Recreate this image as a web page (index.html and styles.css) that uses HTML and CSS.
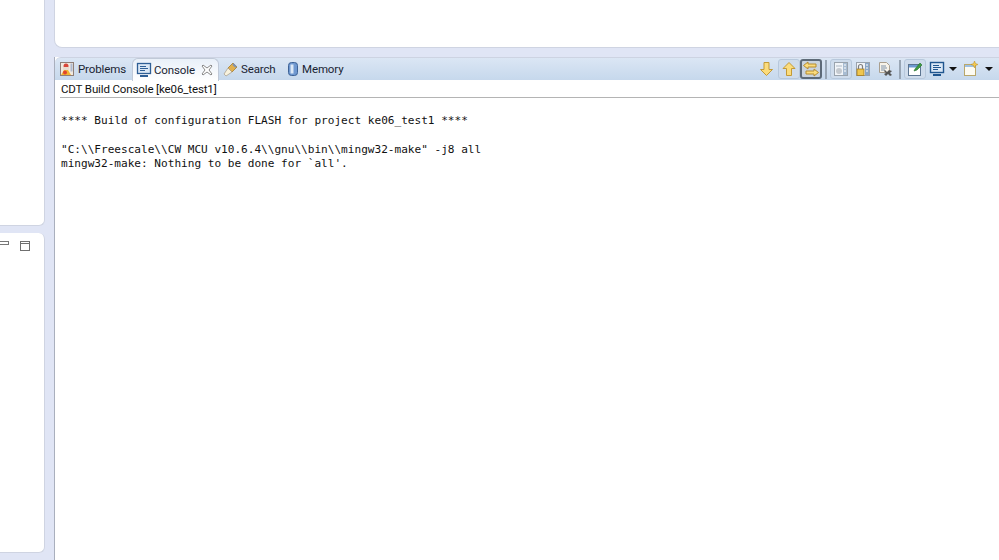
FILE: index.html
```html
<!DOCTYPE html>
<html lang="en">
<head>
<meta charset="utf-8">
<title>Console</title>
<link rel="stylesheet" href="styles.css">
</head>
<body>
<div class="workbench">
  <div class="left-col">
    <div class="left-top"></div>
    <div class="left-bottom">
      <div class="view-controls">
        <svg class="min-icon" width="10" height="5" viewBox="0 0 10 5"><rect x="0.5" y="0.5" width="9" height="3" fill="#fff" stroke="#777"/></svg>
        <svg class="max-icon" width="10" height="10" viewBox="0 0 10 10"><rect x="0.5" y="0.5" width="9" height="9" fill="#fff" stroke="#6f6f6f"/><line x1="1" y1="2.5" x2="9" y2="2.5" stroke="#6f6f6f"/></svg>
      </div>
    </div>
  </div>
  <div class="right-col">
    <div class="editor"></div>
    <div class="console-view">
      <div class="tabbar">
        <div class="tabs">
          <div class="tab tab-problems">
            <svg width="16" height="16" viewBox="0 0 16 16"><rect x="1.500" y="1.500" width="13" height="13" fill="#f1e9df" stroke="#8f7f78"/><circle cx="7" cy="5" r="2.500" fill="#d8473a"/><path d="M4 6h6v3H4z" fill="#e9dcd0"/><path d="M2 14l3-5h4l3 5z" fill="#f2b632"/><circle cx="6" cy="11.500" r="2" fill="#e0442e"/><rect x="11.500" y="2.500" width="2" height="8" fill="#aeb9d0"/></svg>
            <span>Problems</span>
          </div>
          <div class="tab tab-console">
            <svg width="16" height="16" viewBox="0 0 16 16"><rect x="1.500" y="1.500" width="13" height="10" fill="#dbe8f6" stroke="#2f5f96" stroke-width="1.300"/><path d="M4 4.500h6M4 6.500h8M4 8.500h5" stroke="#2f5f96"/><path d="M4 13h8v2H4z" fill="#2f5f96"/></svg>
            <span>Console</span>
            <svg class="close" width="12" height="12" viewBox="0 0 12 12"><path d="M2 1l4 3 4-3 1 1-3 4 3 4-1 1-4-3-4 3-1-1 3-4-3-4z" fill="#fff" stroke="#8a8a8a" stroke-linejoin="round"/></svg>
          </div>
          <div class="tab tab-search">
            <svg width="16" height="16" viewBox="0 0 16 16"><path d="M5 7l5-5 4 4-5 5z" fill="#e2b04e" stroke="#a67c2d" stroke-width=".8"/><path d="M1 13l4-6 4 4-6 4z" fill="#f8f2dd" stroke="#a59a86" stroke-width=".7"/><path d="M10 3l3 3" stroke="#7c92b4" stroke-width="2"/></svg>
            <span>Search</span>
          </div>
          <div class="tab tab-memory">
            <svg width="16" height="16" viewBox="0 0 16 16"><rect x="3.500" y="1.500" width="9" height="13" rx="3" fill="#6f98d0" stroke="#3d6296"/><rect x="5.500" y="3.500" width="3" height="9" fill="#dce8f6"/></svg>
            <span>Memory</span>
          </div>
        </div>
        <div class="toolbar">
          <button class="tool tool-arrow">
            <svg width="16" height="16" viewBox="0 0 16 16"><path d="M5 1.500h5v7h3.500L7.500 14.500 1.500 8.500H5z" fill="#fbdc7c" stroke="#c39a37" stroke-linejoin="round"/></svg>
          </button>
          <button class="tool tool-arrow hover">
            <svg width="16" height="16" viewBox="0 0 16 16"><path d="M5.500 14.500h5v-7H14L8 1.500 2 7.500h3.500z" fill="#fbdc7c" stroke="#c39a37" stroke-linejoin="round"/></svg>
          </button>
          <button class="tool tool-arrow pressed">
            <svg width="18" height="16" viewBox="0 0 18 16"><path d="M6 1v2h8v3H6v2L1.500 4.500z" fill="#fbdc7c" stroke="#b58c30" stroke-linejoin="round"/><path d="M12 8v2H4v3h8v2l4.500-3.500z" fill="#fbdc7c" stroke="#b58c30" stroke-linejoin="round"/></svg>
          </button>
          <span class="sep"></span>
          <button class="tool hover">
            <svg width="16" height="16" viewBox="0 0 16 16"><rect x="1.500" y="1.500" width="13" height="13" fill="#f1f4f8" stroke="#9aa3ad"/><rect x="10" y="2" width="4" height="12" fill="#a8bcd2"/><path d="M11 4h2M11 7h2M11 10h2" stroke="#fff"/><circle cx="6" cy="10" r="3" fill="#c4c9cf"/><rect x="3" y="4" width="6" height="2" fill="#cfd6de"/></svg>
          </button>
          <button class="tool">
            <svg width="16" height="16" viewBox="0 0 16 16"><rect x="1.500" y="1.500" width="13" height="13" fill="#f1f4f8" stroke="#9aa3ad"/><rect x="10" y="2" width="4" height="12" fill="#8aa6c6"/><path d="M11 4h2M11 7h2M11 10h2" stroke="#fff"/><rect x="2" y="8" width="7" height="6.500" fill="#efc64f" stroke="#a37a1e" stroke-width=".8"/><path d="M3.500 8V5.500a2 2 0 0 1 4 0V8" fill="none" stroke="#7d7d7d" stroke-width="1.200"/></svg>
          </button>
          <button class="tool">
            <svg width="16" height="16" viewBox="0 0 16 16"><path d="M2.500 1.500h7l3 3v7h-10z" fill="#f7f3ea" stroke="#a99f8f"/><path d="M4 5h5M4 7h6M4 9h4" stroke="#7f93ab"/><path d="M8 9l2 2 2-2 3 1-2 2 2 2-2 1-2-2-2 2-2-2 2-1-2-2z" fill="#555"/></svg>
          </button>
          <span class="sep"></span>
          <button class="tool hover">
            <svg width="16" height="16" viewBox="0 0 16 16"><rect x="1.500" y="3.500" width="12" height="11" fill="#fff" stroke="#5c7591"/><rect x="2" y="4" width="11" height="2.500" fill="#6f9bd1"/><path d="M8 8l5-6 2 2-5 5-3 1z" fill="#3f9a3f" stroke="#24702b" stroke-width=".6"/></svg>
          </button>
          <button class="tool tool-display">
            <svg width="16" height="16" viewBox="0 0 16 16"><rect x="1.500" y="1.500" width="13" height="10" fill="#dbe8f6" stroke="#20568f" stroke-width="1.400"/><path d="M4 4.500h6M4 6.500h8M4 8.500h5" stroke="#20568f"/><path d="M4 13h8v2H4z" fill="#20568f"/></svg>
          </button>
          <span class="caret caret-a"></span>
          <button class="tool tool-new">
            <svg width="16" height="16" viewBox="0 0 16 16"><rect x="1.500" y="3.500" width="11" height="11" fill="#fdfbf2" stroke="#b9a76a"/><rect x="2" y="4" width="10" height="2" fill="#9dc0e4"/><path d="M11.500 0l1 2.500 2.500 1-2.500 1-1 2.500-1-2.500-2.500-1 2.500-1z" fill="#f4c94f" stroke="#b98c24" stroke-width=".5"/></svg>
          </button>
          <span class="caret caret-b"></span>
        </div>
      </div>
      <div class="console-title"><span>CDT Build Console [ke06_test1]</span></div>
      <pre class="console-output">

**** Build of configuration FLASH for project ke06_test1 ****

"C:\\Freescale\\CW MCU v10.6.4\\gnu\\bin\\mingw32-make" -j8 all
mingw32-make: Nothing to be done for `all'.</pre>
    </div>
  </div>
</div>
</body>
</html>
```
FILE: styles.css
```css
* { box-sizing: border-box; }
html, body { margin: 0; padding: 0; }
body {
  width: 999px;
  height: 560px;
  overflow: hidden;
  background: #e0e5f5;
  font-family: Roboto, "Open Sans", sans-serif;
  color: #111;
}
.workbench {
  display: flex;
  width: 999px;
  height: 560px;
  gap: 9px;
}
.left-col {
  width: 45px;
  flex: none;
  display: flex;
  flex-direction: column;
  gap: 7px;
  padding-bottom: 7px;
}
.left-top {
  height: 226px;
  background: #fff;
  border-radius: 0 0 6px 0;
  border-right: 1px solid #cfd4e2;
  border-bottom: 1px solid #cfd4e2;
}
.left-bottom {
  flex: 1;
  background: #fff;
  border-radius: 0 6px 6px 0;
  border-right: 1px solid #cfd4e2;
  border-bottom: 1px solid #cfd4e2;
  padding-top: 7px;
}
.view-controls {
  display: flex;
  align-items: flex-start;
  gap: 11px;
}
.min-icon { margin-left: -1px; margin-top: 1px; }
.max-icon { margin-top: 1px; }
.right-col {
  flex: 1;
  min-width: 0;
  display: flex;
  flex-direction: column;
  gap: 9px;
}
.editor {
  height: 48px;
  background: #fff;
  border-radius: 0 0 0 8px;
  border-left: 1px solid #cfd4e2;
  border-bottom: 1px solid #cfd4e2;
}
.console-view {
  flex: 1;
  background: #fff;
  border-left: 1px solid #a9afbd;
  display: flex;
  flex-direction: column;
}
.tabbar {
  height: 23px;
  flex: none;
  display: flex;
  justify-content: space-between;
  background: linear-gradient(#dbe6f4, #c6d8ec);
  border-top: 1px solid #cdd3e2;
  border-top-left-radius: 6px;
}
.tabs { display: flex; padding-left: 3px; }
.tab {
  display: flex;
  align-items: center;
  font-size: 11.5px;
  letter-spacing: -0.13px;
  white-space: nowrap;
  color: #1a2433;
  padding-left: 1px;
}
.tab span { margin-left: 2px; }
.tab-problems { width: 74px; }
.tab-problems span { margin-left: 3px; }
.tab-console {
  width: 87px;
  height: 23px;
  padding-left: 3px;
  background: linear-gradient(#e9f0f9, #fff);
  border-radius: 6px 6px 0 0;
  border: 1px solid #c0c9d8;
  border-bottom: none;
}
.tab-console .close { margin-left: 6px; }
.tab-search { width: 62px; margin-left: 3px; }
.tab-memory { width: 70px; }
.tab-memory span { margin-left: 1px; }
.toolbar {
  display: flex;
  align-items: center;
  padding-right: 5px;
}
.tool {
  width: 22px;
  height: 20px;
  padding: 0;
  border: 1px solid transparent;
  border-radius: 3px;
  background: none;
  display: flex;
  align-items: center;
  justify-content: center;
}
.tool.hover {
  background: #cfdcec;
  border-color: #b7c8dc;
}
.tool.pressed {
  background: #c9d3de;
  border: 2px solid #5d6a78;
}
.sep {
  width: 2px;
  height: 19px;
  margin: 0 3px;
  background: #98a5b4;
}
.caret {
  width: 0;
  height: 0;
  border-left: 4px solid transparent;
  border-right: 4px solid transparent;
  border-top: 4px solid #111;
  margin-left: 1px;
  margin-right: 1px;
}
.caret-a { margin-right: 3px; }
.caret-b { margin-left: 3px; }
.console-title {
  height: 18px;
  flex: none;
  margin-left: 5px;
  padding-left: 1px;
  font-size: 11.5px;
  letter-spacing: -0.13px;
  line-height: 19px;
  color: #111;
  border-bottom: 1px solid #b4b4b4;
}
.console-title span { display: block; height: 17px; }
.console-output {
  margin: 0;
  padding: 1.6px 0 0 6px;
  font-family: "DejaVu Sans Mono", "Liberation Mono", monospace;
  font-size: 11.08px;
  line-height: 14.33px;
  color: #111;
}
```
